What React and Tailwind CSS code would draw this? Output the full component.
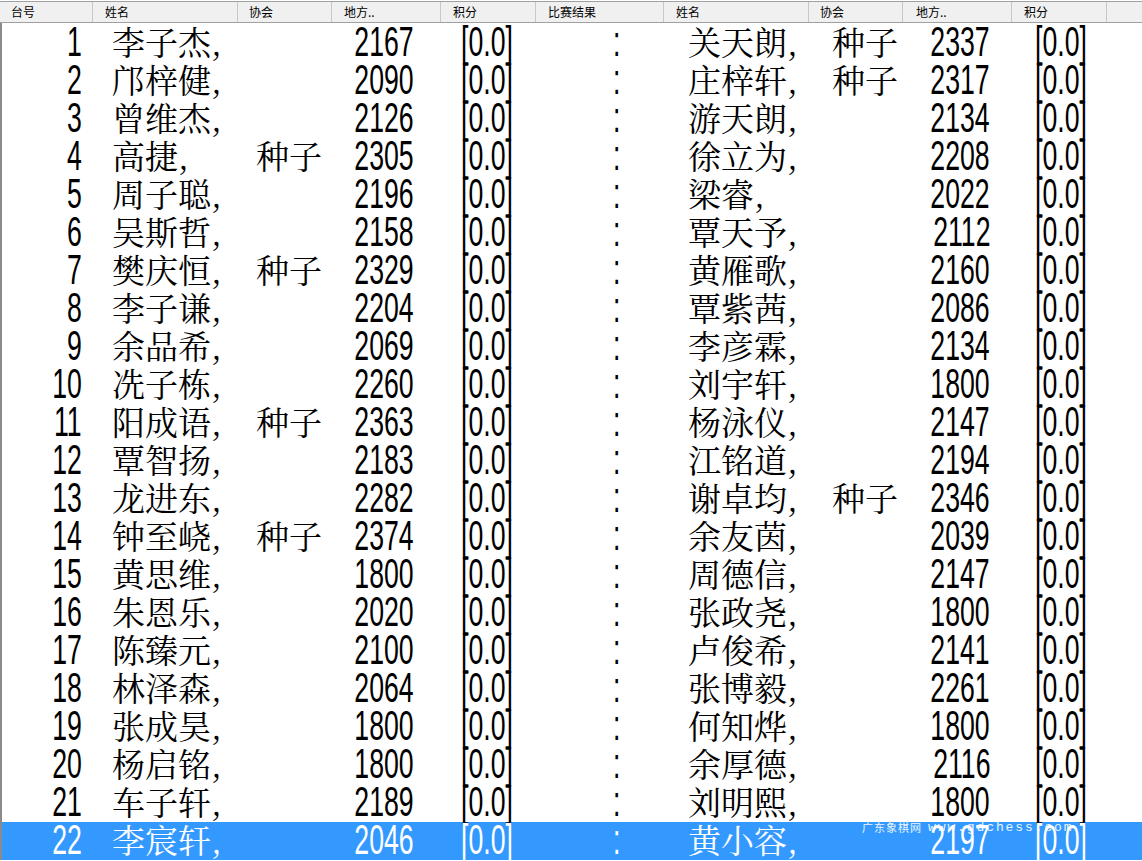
const rows = [
  [1, '李子杰,', '', '2167', '关天朗,', '种子', '2337'],
  [2, '邝梓健,', '', '2090', '庄梓轩,', '种子', '2317'],
  [3, '曾维杰,', '', '2126', '游天朗,', '', '2134'],
  [4, '高捷,', '种子', '2305', '徐立为,', '', '2208'],
  [5, '周子聪,', '', '2196', '梁睿,', '', '2022'],
  [6, '吴斯哲,', '', '2158', '覃天予,', '', '2112'],
  [7, '樊庆恒,', '种子', '2329', '黄雁歌,', '', '2160'],
  [8, '李子谦,', '', '2204', '覃紫茜,', '', '2086'],
  [9, '余品希,', '', '2069', '李彦霖,', '', '2134'],
  [10, '冼子栋,', '', '2260', '刘宇轩,', '', '1800'],
  [11, '阳成语,', '种子', '2363', '杨泳仪,', '', '2147'],
  [12, '覃智扬,', '', '2183', '江铭道,', '', '2194'],
  [13, '龙进东,', '', '2282', '谢卓均,', '种子', '2346'],
  [14, '钟至峣,', '种子', '2374', '余友茵,', '', '2039'],
  [15, '黄思维,', '', '1800', '周德信,', '', '2147'],
  [16, '朱恩乐,', '', '2020', '张政尧,', '', '1800'],
  [17, '陈臻元,', '', '2100', '卢俊希,', '', '2141'],
  [18, '林泽森,', '', '2064', '张博毅,', '', '2261'],
  [19, '张成昊,', '', '1800', '何知烨,', '', '1800'],
  [20, '杨启铭,', '', '1800', '余厚德,', '', '2116'],
  [21, '车子轩,', '', '2189', '刘明熙,', '', '1800'],
  [22, '李宸轩,', '', '2046', '黄小容,', '', '2197'],
];

const headers = [
  ['台号', 'w-[92px] pl-[11px]'],
  ['姓名', 'w-[145px] pl-[12px] border-l'],
  ['协会', 'w-[94px] pl-[11px] border-l'],
  ['地方..', 'w-[109px] pl-[12px] border-l'],
  ['积分', 'w-[95px] pl-[12px] border-l'],
  ['比赛结果', 'w-[128px] pl-[12px] border-l'],
  ['姓名', 'w-[145px] pl-[12px] border-l'],
  ['协会', 'w-[94px] pl-[11px] border-l'],
  ['地方..', 'w-[109px] pl-[13px] border-l'],
  ['积分', 'w-[95px] pl-[12px] border-l'],
  ['', 'flex-1 border-l'],
];

const cjk = "font-['Noto_Serif_CJK_SC','Noto_Sans_CJK_SC',serif]";

// digits in the source are a stretched Arial: tall and narrow
function Num({ children, right }) {
  return (
    <span
      className={`inline-block font-['Liberation_Sans',Arial,sans-serif] text-[43px] leading-none scale-x-[0.62] -translate-y-[2px] ${
        right ? 'origin-right' : 'origin-left'
      }`}
    >
      {children}
    </span>
  );
}

function Name({ children }) {
  return <span className={`${cjk} text-[33px] leading-none inline-block -translate-y-[1px]`}>{children}</span>;
}

function Row({ r, selected }) {
  const [no, n1, c1, e1, n2, c2, e2] = r;
  return (
    <div
      className={`flex h-[38px] items-center ${
        selected ? 'bg-[#3399ff] text-white' : 'text-black'
      }`}
    >
      <div className="w-[80px] flex justify-end">
        <Num right>{no}</Num>
      </div>
      <div className="w-[153px] pl-[30px]">
        <Name>{n1}</Name>
      </div>
      <div className="w-[98px] pl-[21px]">
        <Name>{c1}</Name>
      </div>
      <div className="w-[81px] flex justify-end">
        <Num right>{e1}</Num>
      </div>
      <div className="w-[123px] pl-[47px]">
        <Num>[0.0]</Num>
      </div>
      <div className="w-[128px] pl-[76px]">
        <Num>:</Num>
      </div>
      <div className="w-[145px] pl-[23px]">
        <Name>{n2}</Name>
      </div>
      <div className="w-[94px] pl-[22px]">
        <Name>{c2}</Name>
      </div>
      <div className="w-[86px] flex justify-end">
        <Num right>{e2}</Num>
      </div>
      <div className="w-[122px] pl-[45px]">
        <Num>[0.0]</Num>
      </div>
    </div>
  );
}

export default function App() {
  return (
    <div className="relative w-[1142px] h-[861px] overflow-hidden bg-white">
      {/* column header */}
      <div className="pt-px bg-white">
        <div className="flex h-[22px] items-center bg-[#f0f0f0] border-t border-b border-[#a0a0a0]">
          {headers.map(([label, cls], i) => (
            <div
              key={i}
              className={`${cls} h-full flex items-center border-[#c8c8c8] text-[12px] text-black leading-none`}
            >
              <span className="font-['Noto_Sans_CJK_SC',sans-serif]">{label}</span>
            </div>
          ))}
        </div>
      </div>

      {/* body */}
      <div className="border-l-2 border-[#8a8a8a] pt-px">
        {rows.map((r, i) => (
          <Row key={r[0]} r={r} selected={i === rows.length - 1} />
        ))}
      </div>

      {/* watermark */}
      <div className="absolute left-[862px] top-[821px] flex items-center gap-[6px] text-white/90 leading-none">
        <span className="font-['Noto_Sans_CJK_SC',sans-serif] text-[11px] tracking-[1px]">广东象棋网</span>
        <span className="font-['Liberation_Mono',monospace] text-[13px] tracking-[1.9px]">www.gdchess.com</span>
      </div>
    </div>
  );
}
